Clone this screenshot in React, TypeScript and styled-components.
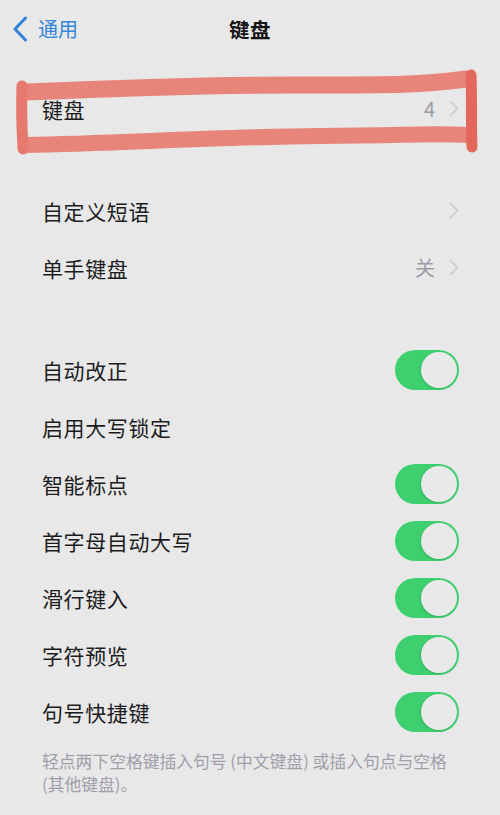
import React from "react";
import styled, { createGlobalStyle } from "styled-components";

const GlobalStyle = createGlobalStyle`
  html, body {
    margin: 0;
    padding: 0;
    background: #e8e8e8;
  }
  body {
    font-family: "Noto Sans CJK SC", "Noto Sans", "Liberation Sans", sans-serif;
    -webkit-font-smoothing: antialiased;
  }
`;

const Page = styled.div`
  position: relative;
  width: 500px;
  height: 815px;
  overflow: hidden;
  background: #e8e8e8;
`;

const NavBar = styled.div`
  display: grid;
  grid-template-columns: 1fr auto 1fr;
  align-items: center;
  height: 58px;
`;

const BackButton = styled.div`
  display: flex;
  align-items: center;
  gap: 10px;
  padding-left: 12px;
  color: #3586dc;
  font-size: 20px;
  line-height: 1;
`;

const Title = styled.div`
  font-size: 20.5px;
  font-weight: 700;
  color: #141414;
  letter-spacing: 0.5px;
`;

const Section = styled.div<{ $gap: number }>`
  display: flex;
  flex-direction: column;
  margin-top: ${(p) => p.$gap}px;
`;

const Row = styled.div`
  display: flex;
  align-items: center;
  justify-content: space-between;
  height: 57px;
  padding: 0 41px 0 42px;
`;

const Label = styled.span`
  font-size: 21px;
  color: #1c1c1e;
  letter-spacing: 0.6px;
`;

const Accessory = styled.div`
  display: flex;
  align-items: center;
  gap: 14px;
`;

const Value = styled.span`
  font-size: 20px;
  color: #9c9ca8;
`;

const ToggleTrack = styled.span<{ $on: boolean }>`
  display: flex;
  align-items: center;
  justify-content: ${(p) => (p.$on ? "flex-end" : "flex-start")};
  box-sizing: border-box;
  width: 64px;
  height: 40px;
  padding: 2px;
  border-radius: 20px;
  background: ${(p) => (p.$on ? "#3ecf6f" : "#d8d8dc")};
`;

const ToggleKnob = styled.span`
  width: 36px;
  height: 36px;
  border-radius: 50%;
  background: #e9e9ea;
  box-shadow: -1px 1px 2px rgba(0, 0, 0, 0.12);
`;

const Footer = styled.p`
  margin: 10px 0 0;
  padding: 0 40px 0 42px;
  font-size: 16.8px;
  line-height: 23px;
  color: #a0a0aa;
`;

const Marker = styled.svg`
  position: absolute;
  left: 0;
  top: 0;
  pointer-events: none;
`;

const Chevron = () => (
  <svg width="10" height="17" viewBox="0 0 10 17">
    <path d="M1.5 1.5 L8.5 8.5 L1.5 15.5" fill="none" stroke="#d0d0d5" strokeWidth="2" strokeLinecap="round" strokeLinejoin="round" />
  </svg>
);

const Toggle = ({ on }: { on: boolean }) => (
  <ToggleTrack $on={on}>
    <ToggleKnob />
  </ToggleTrack>
);

const switches: { label: string; on?: boolean }[] = [
  { label: "自动改正", on: true },
  { label: "启用大写锁定" },
  { label: "智能标点", on: true },
  { label: "首字母自动大写", on: true },
  { label: "滑行键入", on: true },
  { label: "字符预览", on: true },
  { label: "句号快捷键", on: true },
];

export default function App() {
  return (
    <Page>
      <GlobalStyle />
      <NavBar>
        <BackButton>
          <svg width="16" height="26" viewBox="0 0 16 26">
            <path d="M13.5 2 L3 13 L13.5 24" fill="none" stroke="#2f82dc" strokeWidth="3" strokeLinecap="round" strokeLinejoin="round" />
          </svg>
          <span>通用</span>
        </BackButton>
        <Title>键盘</Title>
        <div />
      </NavBar>

      <Section $gap={22}>
        <Row>
          <Label>键盘</Label>
          <Accessory>
            <Value>4</Value>
            <Chevron />
          </Accessory>
        </Row>
      </Section>

      <Section $gap={45}>
        <Row>
          <Label>自定义短语</Label>
          <Chevron />
        </Row>
        <Row>
          <Label>单手键盘</Label>
          <Accessory>
            <Value>关</Value>
            <Chevron />
          </Accessory>
        </Row>
      </Section>

      <Section $gap={45}>
        {switches.map((s) => (
          <Row key={s.label}>
            <Label>{s.label}</Label>
            {s.on !== undefined && <Toggle on={s.on} />}
          </Row>
        ))}
      </Section>

      <Footer>
        轻点两下空格键插入句号 (中文键盘) 或插入句点与空格
        <br />
        (其他键盘)。
      </Footer>

      {/* hand-drawn highlight around the first row */}
      <Marker width="500" height="170" viewBox="0 0 500 170">
        <g fill="none" strokeLinecap="round" strokeLinejoin="round">
          <path d="M26 92 C 120 88, 200 85, 300 85 S 420 85, 466 79" stroke="#e8857b" strokeWidth="17" />
          <path d="M26 145 C 120 143, 220 137, 320 136 S 430 133, 468 135" stroke="#e8857b" strokeWidth="16" />
          <path d="M22 86 C 21 110, 22 130, 23 149" stroke="#e7786d" strokeWidth="11" />
          <path d="M471 75 C 472 100, 471 125, 472 147" stroke="#e3685b" strokeWidth="11" />
        </g>
      </Marker>
    </Page>
  );
}
